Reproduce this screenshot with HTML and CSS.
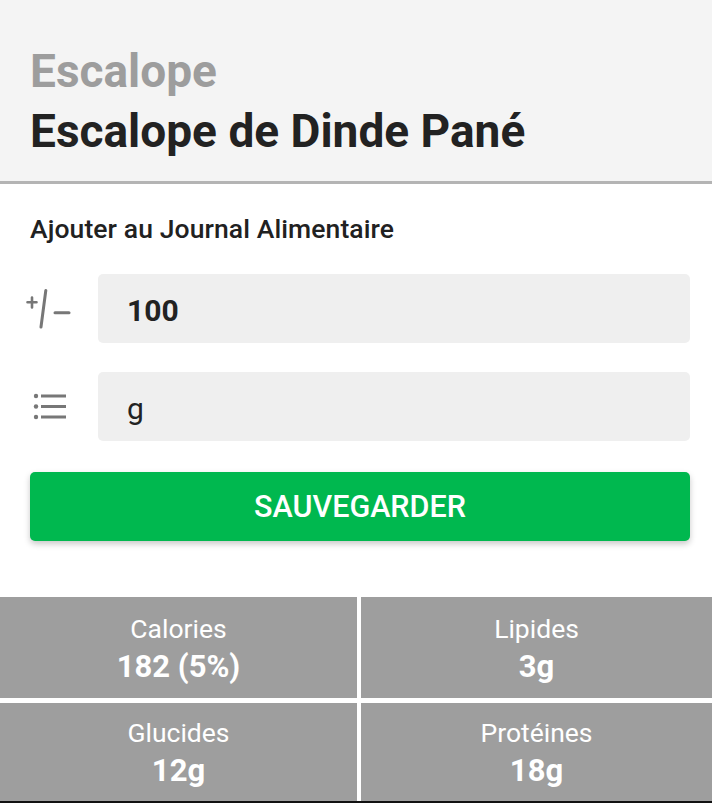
FILE: index.html
```html
<!DOCTYPE html>
<html lang="fr">
<head>
<meta charset="utf-8">
<link rel="stylesheet" href="styles.css">
</head>
<body>
<div class="screen">
  <header class="head">
    <div class="cat">Escalope</div>
    <div class="name">Escalope de Dinde Pané</div>
  </header>
  <section class="form">
    <div class="label">Ajouter au Journal Alimentaire</div>
    <div class="row">
      <div class="icon">
        <svg class="pm" width="46" height="40" viewBox="0 0 46 40" fill="none" stroke="#777" stroke-linecap="round">
          <path d="M1.5 13.3H10.5M6 8.5V18.5" stroke-width="2.6"/>
          <path d="M19.8 1.5L15 38" stroke-width="3"/>
          <path d="M29 23.7H43" stroke-width="3"/>
        </svg>
      </div>
      <div class="field bold">100</div>
    </div>
    <div class="row">
      <div class="icon">
        <svg class="ls" width="36" height="30" viewBox="0 0 36 30" fill="#777" stroke="#777">
          <circle cx="4" cy="4" r="2.2" stroke="none"/>
          <circle cx="4" cy="14.5" r="2.2" stroke="none"/>
          <circle cx="4" cy="25" r="2.2" stroke="none"/>
          <path d="M9 4H34M9 14.5H34M9 25H34" stroke-width="3"/>
        </svg>
      </div>
      <div class="field">g</div>
    </div>
    <button class="save">SAUVEGARDER</button>
  </section>
  <section class="grid">
    <div class="cell"><div class="k">Calories</div><div class="v">182 (5%)</div></div>
    <div class="cell"><div class="k">Lipides</div><div class="v">3g</div></div>
    <div class="cell"><div class="k">Glucides</div><div class="v">12g</div></div>
    <div class="cell"><div class="k">Protéines</div><div class="v">18g</div></div>
  </section>
</div>
</body>
</html>
```
FILE: styles.css
```css
* { box-sizing: border-box; }
html, body { margin: 0; padding: 0; background: #fff; }
body { font-family: Roboto, "Noto Sans", sans-serif; width: 712px; height: 803px; overflow: hidden; }
.screen { width: 712px; height: 803px; background: #fff; display: flex; flex-direction: column; }

.head {
  background: #f4f4f4;
  padding: 41px 30px 20px;
  border-bottom: 3px solid #b4b4b4;
}
.cat, .name { font-size: 46px; line-height: 60px; font-weight: 700; }
.cat { color: #9d9d9d; }
.name { color: #222; }

.form { padding: 30px 22px 0 30px; display: flex; flex-direction: column; }
.label { font-size: 26.5px; line-height: 30px; color: #212121; font-weight: 500; letter-spacing: 0.1px; }
.row { display: flex; align-items: stretch; margin-top: 30px; }
.row + .row { margin-top: 29px; }
.icon { width: 68px; flex: none; display: flex; align-items: center; }
.pm { margin-left: -4px; }
.ls { margin-left: 2px; }
.field {
  flex: 1; height: 69px; background: #efefef; border-radius: 5px;
  display: flex; align-items: center; padding: 3px 0 0 29px;
  font-size: 30px; color: #222;
}
.field.bold { font-weight: 700; }
.save {
  margin-top: 31px; height: 69px; border: 0; border-radius: 5px;
  background: #00b84f; color: #fff; font-family: inherit;
  font-size: 30.5px; font-weight: 500;
  box-shadow: 0 3px 6px rgba(0,0,0,0.22);
}

.grid {
  margin-top: 56px; flex: 1;
  display: grid; grid-template-columns: 357px 351px; grid-template-rows: 101px 98px;
  column-gap: 4px; row-gap: 5px; background: #fff;
  border-bottom: 2px solid #111;
}
.cell { background: #9e9e9e; color: #fff; display: flex; flex-direction: column; align-items: center; justify-content: center; }
.k { font-size: 26.5px; line-height: 37px; }
.v { font-size: 31px; line-height: 39px; font-weight: 700; }
```
